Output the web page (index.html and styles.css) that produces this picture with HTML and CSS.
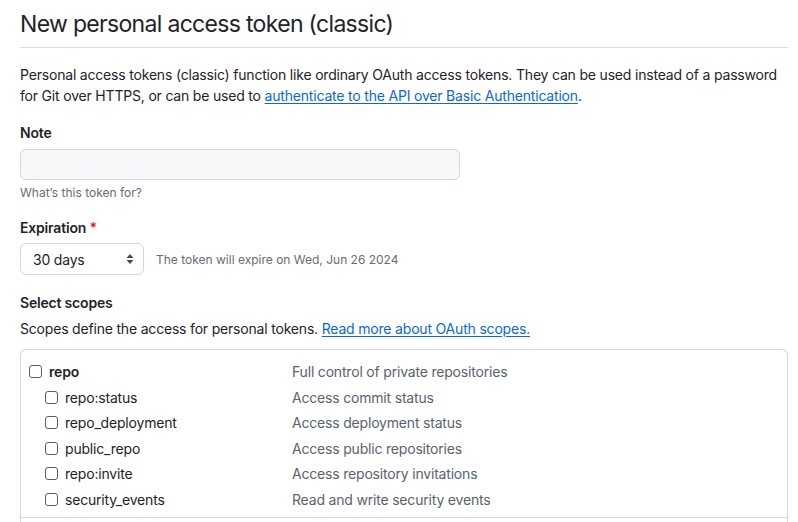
FILE: index.html
```html
<!DOCTYPE html>
<html lang="en">
<head>
<meta charset="utf-8">
<title>New personal access token (classic)</title>
<link rel="stylesheet" href="styles.css">
</head>
<body>
<main class="page">
  <h2 class="title">New personal access token (classic)</h2>
  <p class="intro">Personal access tokens (classic) function like ordinary OAuth access tokens. They can be used instead of a password for Git over HTTPS, or can be used to <a href="#" class="link">authenticate to the API over Basic Authentication</a>.</p>

  <div class="field field-note">
    <label class="label" for="note">Note</label>
    <input id="note" class="input" type="text">
    <p class="hint">What’s this token for?</p>
  </div>

  <div class="field">
    <div class="label label-tight">Expiration <span class="req">*</span></div>
    <div class="exp-row">
      <div class="select">
        <span>30 days</span>
        <svg class="updown" width="8" height="12" viewBox="0 0 8 12"><path d="M4 1 L7.5 5 H0.5 Z M4 11 L0.5 7 H7.5 Z" fill="#424a53"/></svg>
      </div>
      <span class="exp-note">The token will expire on Wed, Jun 26 2024</span>
    </div>
  </div>

  <div class="field field-scopes">
    <div class="label label-tight">Select scopes</div>
    <p class="scopes-desc">Scopes define the access for personal tokens. <a href="#" class="link">Read more about OAuth scopes.</a></p>
  </div>

  <div class="scopes">
    <div class="group">
      <div class="row">
        <span class="name top"><span class="cb"></span><b>repo</b></span>
        <span class="desc">Full control of private repositories</span>
      </div>
      <div class="row">
        <span class="name sub"><span class="cb"></span>repo:status</span>
        <span class="desc">Access commit status</span>
      </div>
      <div class="row">
        <span class="name sub"><span class="cb"></span>repo_deployment</span>
        <span class="desc">Access deployment status</span>
      </div>
      <div class="row">
        <span class="name sub"><span class="cb"></span>public_repo</span>
        <span class="desc">Access public repositories</span>
      </div>
      <div class="row">
        <span class="name sub"><span class="cb"></span>repo:invite</span>
        <span class="desc">Access repository invitations</span>
      </div>
      <div class="row">
        <span class="name sub"><span class="cb"></span>security_events</span>
        <span class="desc">Read and write security events</span>
      </div>
    </div>
    <div class="group-next"></div>
  </div>
</main>
</body>
</html>
```

FILE: styles.css
```css
html, body {
  margin: 0;
  padding: 0;
  overflow: hidden;
  background: #ffffff;
}
body {
  font-family: Inter, "Liberation Sans", sans-serif;
  font-size: 14px;
  line-height: 21px;
  letter-spacing: -0.19px;
  color: #1f2328;
}
.page {
  padding: 0 10px 0 20px;
}
.title {
  margin: 0;
  padding: 8px 0 7px;
  font-size: 23px;
  line-height: 32px;
  font-weight: 400;
  letter-spacing: -0.68px;
  border-bottom: 1px solid #d8dee4;
}
.intro {
  margin: 17px 0 0;
  line-height: 20.5px;
}
.link {
  color: #0969da;
  text-decoration: underline;
  text-underline-offset: 2px;
}
.field {
  margin-top: 15px;
}
.field-note {
  margin-top: 16px;
}
.field-scopes {
  margin-top: 17px;
}
.label {
  display: block;
  font-weight: 600;
  line-height: 21px;
  margin-bottom: 6px;
}
.label-tight {
  margin-bottom: 5px;
}
.req {
  color: #d1242f;
}
.input {
  display: block;
  box-sizing: border-box;
  width: 440px;
  height: 31px;
  margin: 0;
  background: #f6f8fa;
  border: 1px solid #d0d7de;
  border-radius: 6px;
  font: inherit;
}
.hint {
  margin: 4px 0 0;
  font-size: 12px;
  line-height: 18px;
  letter-spacing: 0;
  color: #656d76;
}
.exp-row {
  display: flex;
  align-items: center;
  gap: 12px;
}
.select {
  box-sizing: border-box;
  width: 124px;
  height: 32px;
  padding: 0 9px 0 12px;
  border: 1px solid #d0d7de;
  border-radius: 6px;
  background: #ffffff;
  display: flex;
  align-items: center;
  justify-content: space-between;
}
.exp-note {
  font-size: 12px;
  letter-spacing: 0;
  color: #656d76;
}
.scopes-desc {
  margin: 0;
}
.scopes {
  margin-top: 10px;
  border: 1px solid #d0d7de;
  border-bottom: 0;
  border-radius: 6px 6px 0 0;
}
.group {
  padding: 9px 8px 5px;
  border-bottom: 1px solid #d0d7de;
}
.group-next {
  height: 20px;
}
.row {
  display: grid;
  grid-template-columns: 263px 1fr;
  height: 25.5px;
  align-items: center;
}
.name {
  display: flex;
  align-items: center;
  gap: 7px;
}
.name.sub {
  padding-left: 16px;
}
.name b {
  font-weight: 600;
}
.cb {
  box-sizing: border-box;
  width: 13px;
  height: 13px;
  border: 1px solid #57606a;
  border-radius: 3px;
  background: #ffffff;
  flex: none;
}
.desc {
  color: #59636e;
}
```
